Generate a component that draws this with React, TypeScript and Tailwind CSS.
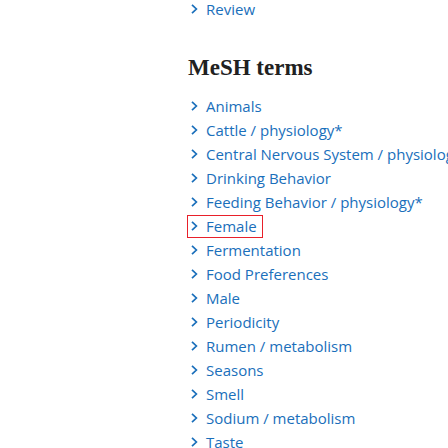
import React from 'react';

const terms = [
  'Animals',
  'Cattle / physiology*',
  'Central Nervous System / physiology*',
  'Drinking Behavior',
  'Feeding Behavior / physiology*',
  'Female',
  'Fermentation',
  'Food Preferences',
  'Male',
  'Periodicity',
  'Rumen / metabolism',
  'Seasons',
  'Smell',
  'Sodium / metabolism',
  'Taste',
];

function Chevron() {
  return (
    <svg className="w-[7px] h-[10px] shrink-0" viewBox="0 0 7 10" fill="none">
      <path d="M1 0.8 5.4 5 1 9.2" stroke="#1a6fbb" strokeWidth="1.7" />
    </svg>
  );
}

function TermLink({ label, focused = false }: { label: string; focused?: boolean }) {
  return (
    <li className="h-[24px] flex items-center">
      <a
        href="#"
        className={`inline-flex h-[21px] items-center gap-[8px] pl-[3px] pr-[5px] text-[#1a6fbb] ${
          focused ? 'outline outline-1 outline-[#e8202a]' : ''
        }`}
      >
        <Chevron />
        <span>{label}</span>
      </a>
    </li>
  );
}

export default function App() {
  return (
    <div className="w-[448px] h-[448px] overflow-hidden bg-white pl-[188px] font-['Open_Sans',sans-serif] text-[15px] leading-[24px] whitespace-nowrap">
      <ul className="-mt-[3px]">
        <TermLink label="Review" />
      </ul>
      <h2 className="mt-[32px] mb-[11px] font-['Liberation_Serif',serif] font-bold text-[23px] leading-[30px] text-[#212121]">
        MeSH terms
      </h2>
      <ul>
        {terms.map((t) => (
          <TermLink key={t} label={t} focused={t === 'Female'} />
        ))}
      </ul>
    </div>
  );
}
